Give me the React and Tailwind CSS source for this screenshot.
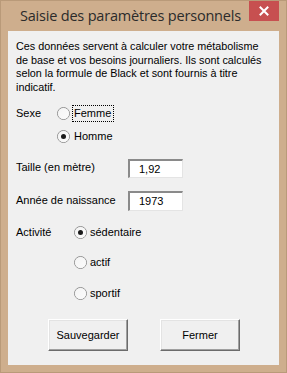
import React from "react";

const body = { fontFamily: "Tahoma, 'Liberation Sans', Arial, sans-serif" };

function Radio({ checked }) {
  return (
    <span className="relative inline-flex h-[13px] w-[13px] shrink-0 items-center justify-center rounded-full border border-[#8f8f8f] bg-gradient-to-br from-[#dcdcdc] to-[#ffffff]">
      <span className="h-[11px] w-[11px] rounded-full bg-gradient-to-br from-[#f4f4f4] to-[#fbfbfb] flex items-center justify-center">
        {checked && <span className="h-[5px] w-[5px] rounded-full bg-[#1a1a1a]" />}
      </span>
    </span>
  );
}

function Field({ value }) {
  return (
    <div className="ml-auto mr-0 flex h-full w-[55px] items-center border-t-2 border-l-2 border-r border-b border-t-[#8a8a8a] border-l-[#8a8a8a] border-r-[#e4e4e4] border-b-[#e4e4e4] bg-white pl-[9px] text-[11px] text-black">
      {value}
    </div>
  );
}

function Button({ children }) {
  return (
    <button className="flex h-[32px] w-[80px] items-center justify-center border border-t-white border-l-white border-r-[#6b6b6b] border-b-[#6b6b6b] bg-[#f0f0f0] text-[11px] text-black shadow-[inset_-1px_-1px_0_#a0a0a0,inset_1px_1px_0_#e3e3e3]">
      {children}
    </button>
  );
}

export default function App() {
  return (
    <div className="flex h-[373px] w-[287px] flex-col border border-[#b99a79] bg-[#ceae8d]">
      <div className="flex h-[30px] shrink-0 items-start">
        <div
          className="whitespace-nowrap pl-[19px] pt-[4px] text-[14.5px] leading-[21px] text-[#2b2b2b]"
          style={{ fontFamily: "'Segoe UI', 'Open Sans', sans-serif", letterSpacing: "-0.2px" }}
        >
          Saisie des paramètres personnels
        </div>
        <div className="ml-auto mr-[7px] flex h-[20px] w-[30px] shrink-0 items-center justify-center bg-[#c75050]">
          <svg width="10" height="10" viewBox="0 0 10 10">
            <path d="M1.5 1.5 L8.5 8.5 M8.5 1.5 L1.5 8.5" stroke="white" strokeWidth="2" strokeLinecap="square" />
          </svg>
        </div>
      </div>
      <div
        className="mx-[7px] mb-[7px] flex flex-1 flex-col bg-[#f0f0f0] pl-[8px] pt-[9px] text-[11px] text-black"
        style={body}
      >
        <p className="whitespace-nowrap text-[10.8px] leading-[13.5px]">
          Ces données servent à calculer votre métabolisme<br />
          de base et vos besoins journaliers. Ils sont calculés<br />
          selon la formule de Black et sont fournis à titre<br />
          indicatif.
        </p>
        <div className="mt-[10px] flex h-[18px] items-center">
          <span className="w-[41px]">Sexe</span>
          <Radio />
          <span className="ml-[2px] flex h-[17px] items-center border border-dotted border-black pl-[1px] pr-[2px]">Femme</span>
        </div>
        <div className="mt-[5px] flex h-[18px] items-center pl-[41px]">
          <Radio checked />
          <span className="ml-[4px]">Homme</span>
        </div>
        <div className="mt-[14px] flex h-[19px] w-[167px] items-center">
          <span className="-mt-[2px]">Taille (en mètre)</span>
          <Field value="1,92" />
        </div>
        <div className="mt-[13px] flex h-[20px] w-[167px] items-center">
          <span className="-mt-[2px]">Année de naissance</span>
          <Field value="1973" />
        </div>
        <div className="mt-[12px] flex h-[18px] items-center">
          <span className="w-[58px]">Activité</span>
          <Radio checked />
          <span className="ml-[3px]">sédentaire</span>
        </div>
        <div className="mt-[12px] flex h-[18px] items-center pl-[58px]">
          <Radio />
          <span className="ml-[3px]">actif</span>
        </div>
        <div className="mt-[13px] flex h-[18px] items-center pl-[58px]">
          <Radio />
          <span className="ml-[3px]">sportif</span>
        </div>
        <div className="mt-[17px] flex gap-[32px] pl-[32px]">
          <Button>Sauvegarder</Button>
          <Button>Fermer</Button>
        </div>
      </div>
    </div>
  );
}
